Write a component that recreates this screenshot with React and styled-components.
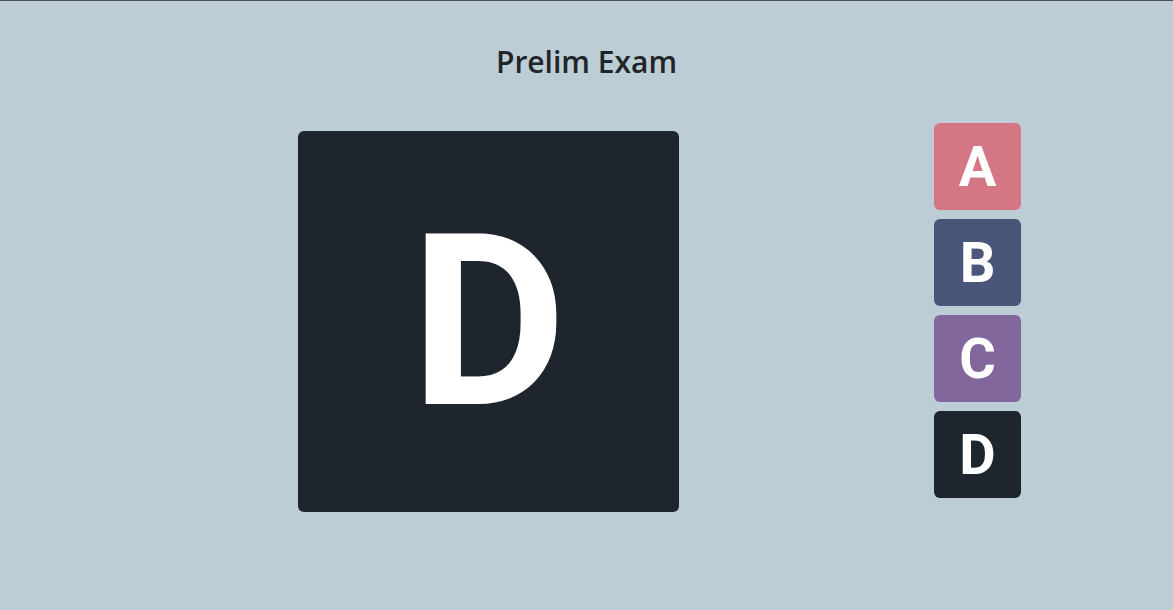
import React, {useState} from 'react';
import styled, {createGlobalStyle} from 'styled-components';

const GlobalStyle = createGlobalStyle`
    html, body {
        margin: 0;
        padding: 0;
        background-color: #bccdd5;
    }
    body {
        font-family: "Open Sans", "Liberation Sans", sans-serif;
        color: #212529;
    }
`;

const Page = styled.div`
    min-height: 610px;
    box-sizing: border-box;
    border-top: 1px solid #4d5257;
    background-color: #bccdd5;
`;

const Title = styled.h3`
    margin: 0;
    padding-top: 41px;
    text-align: center;
    font-size: 30px;
    font-weight: 600;
    line-height: 40px;
    color: #212529;
`;

const Stage = styled.div`
    display: flex;
    align-items: flex-start;
    padding-left: 298px;
    margin-top: 41px;
`;

const Display = styled.div`
    width: 381px;
    height: 381px;
    margin-top: 8px;
    border-radius: 6px;
    background-color: ${p => p.$color};
    display: flex;
    align-items: center;
    justify-content: center;
    color: #fff;
    font-family: Roboto, "Liberation Sans", sans-serif;
    font-weight: 700;
    font-size: 240px;
    line-height: 1;
`;

const Choices = styled.div`
    display: flex;
    flex-direction: column;
    gap: 9px;
    margin-left: 255px;
`;

const Choice = styled.button`
    width: 87px;
    height: 87px;
    padding: 0;
    border: none;
    border-radius: 6px;
    background-color: ${p => p.$color};
    color: #fff;
    font-family: Roboto, "Liberation Sans", sans-serif;
    font-weight: 700;
    font-size: 56px;
    line-height: 1;
    cursor: pointer;
    display: flex;
    align-items: center;
    justify-content: center;
`;

const options = [
    {letter: 'A', color: '#d47684'},
    {letter: 'B', color: '#4a5679'},
    {letter: 'C', color: '#82679d'},
    {letter: 'D', color: '#1f252d'},
];

const App = () => {
    const [picked, setPicked] = useState(options[3]);

    return (
        <Page>
            <GlobalStyle />
            <Title>Prelim Exam</Title>
            <Stage>
                <Display $color={picked.color}>{picked.letter}</Display>
                <Choices>
                    {options.map(o => (
                        <Choice key={o.letter} $color={o.color} onClick={() => setPicked(o)}>
                            {o.letter}
                        </Choice>
                    ))}
                </Choices>
            </Stage>
        </Page>
    );
};

export default App;
